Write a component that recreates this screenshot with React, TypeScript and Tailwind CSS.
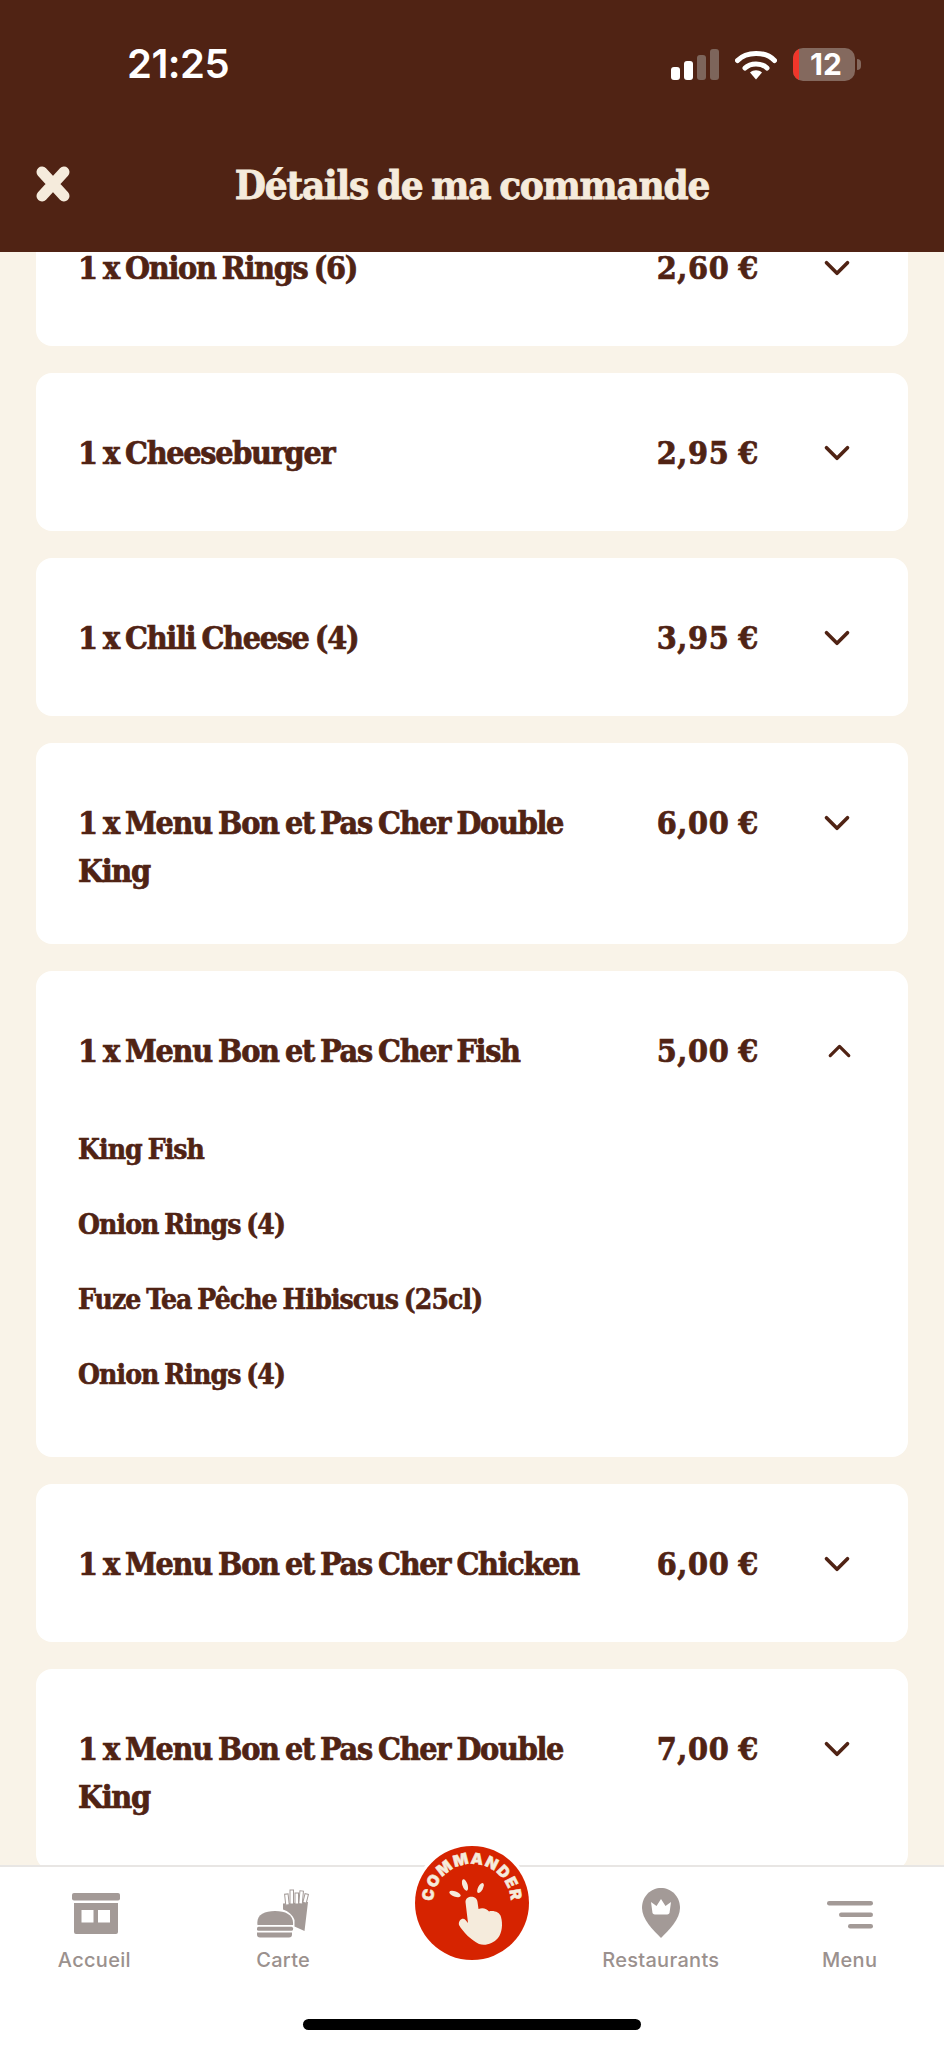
import type { ReactNode } from 'react';
import { ChevronDown, ChevronUp } from 'lucide-react';

const displayFont = "font-['DejaVu_Serif_Condensed','DejaVu_Serif',serif]";
const rowText = `text-[32px] leading-[48px] font-bold text-[#502314] [-webkit-text-stroke:0.7px_#502314] ${displayFont}`;

interface OrderRowProps {
  title: string;
  price: string;
  open?: boolean;
  items?: string[];
}

function OrderRow({ title, price, open = false, items = [] }: OrderRowProps) {
  return (
    <div className="min-h-[158px] shrink-0 rounded-[16px] bg-white pt-[56px] pb-[49px] pl-[42px] pr-[50px]">
      <div className="flex items-start">
        <h3 className={`min-w-0 flex-1 pr-[20px] tracking-[-1.3px] [word-spacing:-2.5px] ${rowText}`}>
          {title}
        </h3>
        <span className={`w-[120px] shrink-0 text-right tracking-[0.7px] [word-spacing:-2px] ${rowText}`}>
          {price}
        </span>
        <span className={`ml-[57px] flex h-[48px] w-[42px] shrink-0 items-center justify-center text-[#502314] ${open ? 'pl-[5px]' : ''}`}>
          {open ? <ChevronUp size={42} strokeWidth={2.1} /> : <ChevronDown size={42} strokeWidth={2.1} />}
        </span>
      </div>
      {items.length > 0 && (
        <ul className="mt-[52px] flex flex-col gap-[30px] pb-[11px]">
          {items.map((item, i) => (
            <li
              key={i}
              className={`text-[28px] leading-[45px] font-bold tracking-[-0.9px] text-[#502314] [-webkit-text-stroke:0.6px_#502314] [word-spacing:-2px] ${displayFont}`}
            >
              {item}
            </li>
          ))}
        </ul>
      )}
    </div>
  );
}

function StatusIcons() {
  return (
    <div className="flex items-center gap-[16px]">
      <svg width="48" height="31" viewBox="0 0 48 31" fill="none">
        <rect x="0" y="18" width="9" height="13" rx="3" fill="#fff" />
        <rect x="13" y="12" width="9" height="19" rx="3" fill="#fff" />
        <rect x="26" y="6" width="9" height="25" rx="3" fill="#7d655b" />
        <rect x="39" y="0" width="9" height="31" rx="3" fill="#7d655b" />
      </svg>
      <svg width="42" height="31" viewBox="0 0 42 31" fill="none">
        <path d="M2.5 11.5C11.5 2 30.5 2 39.5 11.5" stroke="#fff" strokeWidth="5" strokeLinecap="round" />
        <path d="M10 19C15.5 13.5 26.5 13.5 32 19" stroke="#fff" strokeWidth="5" strokeLinecap="round" />
        <path d="M15 23.5C18.5 20.5 23.5 20.5 27 23.5L21 30.5Z" fill="#fff" />
      </svg>
      <div className="flex items-center">
        <div className="relative h-[33px] w-[62px] overflow-hidden rounded-[10px] bg-[#84695e]">
          <div className="h-full w-[6px] bg-[#f0362a]" />
          <span className="absolute inset-0 flex items-center justify-center pl-[4px] font-['Inter',sans-serif] text-[30px] leading-none font-bold text-white">
            12
          </span>
        </div>
        <div className="ml-[2px] h-[11px] w-[4px] rounded-r-full bg-[#84695e]" />
      </div>
    </div>
  );
}

function HomeIcon() {
  return (
    <svg className="mb-[3px] ml-[4px]" width="48" height="42" viewBox="0 0 48 42" fill="#a39a97">
      <rect x="0" y="0" width="48" height="7.5" rx="2" />
      <path fillRule="evenodd" d="M2 10h44v29a2 2 0 0 1-2 2H4a2 2 0 0 1-2-2ZM9.500 17v12.500h12V17ZM26 17v12.500h12V17Z" />
    </svg>
  );
}

function BurgerIcon() {
  return (
    <svg width="52" height="50" viewBox="0 0 52 50" fill="#a39a97">
      <path d="M26 15.500L51 14L47.500 43L37.500 38.500L37.500 32C36 27 31 23 26 21.500Z" />
      <g fill="#fff" stroke="#a39a97" strokeWidth="1">
        <rect x="28" y="6" width="3.500" height="11" transform="rotate(-6 30 10)" />
        <rect x="33" y="2" width="3.500" height="14" />
        <rect x="38" y="5" width="3.500" height="11" />
        <rect x="42.500" y="3" width="3.500" height="13" transform="rotate(5 45 8)" />
        <rect x="47" y="6" width="3.500" height="9" transform="rotate(14 49 10)" />
      </g>
      <path d="M0.500 37C-1 27 7 23 18 23C29 23 37 27 36 37Z" />
      <rect x="0" y="38.800" width="36" height="4" rx="1.500" fill="#a39a97" />
      <path d="M0 44.500h35v2a3 3 0 0 1-3 3H3a3 3 0 0 1-3-3Z" />
    </svg>
  );
}

function PinIcon() {
  return (
    <svg width="38" height="50" viewBox="0 0 38 50">
      <path d="M19 0C9 0 0 8 0 20C0 31 11 42 19 50C27 42 38 31 38 20C38 8 29 0 19 0Z" fill="#a39a97" />
      <path d="M9 14L14.500 18L19 11L23.500 18L29 14L27.500 25C27 26.500 25.500 26.500 24 26.500H14C12.500 26.500 11 26.500 10.500 25Z" fill="#fff" />
    </svg>
  );
}

function MenuIcon() {
  return (
    <svg className="mb-[9px]" width="46" height="28" viewBox="0 0 46 28" fill="#a39a97">
      <rect x="0" y="0" width="46" height="4.500" rx="2.200" />
      <rect x="12" y="11.500" width="34" height="4.500" rx="2.200" />
      <rect x="21" y="23" width="25" height="4.500" rx="2.200" />
    </svg>
  );
}

function CommanderButton() {
  return (
    <div className="h-[120px] w-[120px] rounded-full bg-white p-[3px]">
      <svg width="114" height="114" viewBox="0 0 114 114">
        <circle cx="57" cy="57" r="57" fill="#d62300" />
        <defs>
          <path id="commander-arc" d="M20.350 70.300A39 39 0 1 1 93.650 70.300" />
        </defs>
        <text fill="#f5ebdc" stroke="#f5ebdc" strokeWidth="0.5" fontFamily="Inter, sans-serif" fontWeight="900" fontSize="15.500" letterSpacing="1.200" textAnchor="middle">
          <textPath href="#commander-arc" startOffset="50%">COMMANDER</textPath>
        </text>
        <g fill="#f5ebdc">
          <ellipse cx="40" cy="48" rx="6" ry="2.600" transform="rotate(20 40 48)" />
          <ellipse cx="50" cy="39" rx="2.600" ry="6" transform="rotate(-18 50 39)" />
          <ellipse cx="65.500" cy="42" rx="2.400" ry="5.500" transform="rotate(28 65.500 42)" />
          <path d="M50.500 56C50.500 49 62 49 62.500 56L63.500 63C68 61 72 63 74 65.500C78 64 85 66 86 71C88 78 87 87 83 92C78 98 70 100 64 98C56 94 48 86 44 79C43 74 48 71 50.500 74L53 77Z" />
        </g>
      </svg>
    </div>
  );
}

function TabItem({ icon, label }: { icon: ReactNode; label: string }) {
  return (
    <div className="flex flex-col items-center">
      <div className="flex h-[50px] items-end">{icon}</div>
      <span className="mt-[8px] font-['Inter',sans-serif] text-[20px] leading-[28px] font-medium tracking-[0.3px] text-[#9b918e]">
        {label}
      </span>
    </div>
  );
}

const doubleKing = '1 x Menu Bon et Pas Cher Double King';

export default function App() {
  return (
    <div className="flex h-[2048px] w-[944px] flex-col overflow-hidden bg-[#f9f3e8]">
      {/* Header */}
      <header className="relative z-10 h-[252px] shrink-0 bg-[#502314]">
        <div className="flex h-[82px] items-center justify-between pt-[46px] pr-[83px] pl-[127px]">
          <span className="font-['Inter',sans-serif] text-[40px] leading-[36px] font-semibold tracking-[-0.5px] text-white">21:25</span>
          <StatusIcons />
        </div>
        <div className="relative mt-[73px] flex h-[60px] items-center justify-center">
          <svg className="absolute top-[11px] left-[36px]" width="34" height="36" viewBox="0 0 34 36">
            <path d="M6 6L28 30M28 6L6 30" stroke="#f5ebdc" strokeWidth="11" strokeLinecap="round" />
          </svg>
          <h1 className={`text-[40px] leading-[60px] font-bold tracking-[-1.2px] text-[#f5ebdc] [-webkit-text-stroke:0.8px_#f5ebdc] [word-spacing:-2.5px] ${displayFont}`}>
            Détails de ma commande
          </h1>
        </div>
      </header>

      {/* Order lines */}
      <main className="min-h-0 flex-1 overflow-hidden px-[36px]">
        <div className="-mt-[64px] flex flex-col gap-[27px]">
          <OrderRow title="1 x Onion Rings (6)" price="2,60 €" />
          <OrderRow title="1 x Cheeseburger" price="2,95 €" />
          <OrderRow title="1 x Chili Cheese (4)" price="3,95 €" />
          <OrderRow title={doubleKing} price="6,00 €" />
          <OrderRow
            title="1 x Menu Bon et Pas Cher Fish"
            price="5,00 €"
            open
            items={['King Fish', 'Onion Rings (4)', 'Fuze Tea Pêche Hibiscus (25cl)', 'Onion Rings (4)']}
          />
          <OrderRow title="1 x Menu Bon et Pas Cher Chicken" price="6,00 €" />
          <OrderRow title={doubleKing} price="7,00 €" />
        </div>
      </main>

      {/* Tab bar */}
      <nav className="relative z-10 h-[183px] shrink-0 border-t-2 border-[#e8e6e4] bg-white">
        <div className="grid grid-cols-5 pt-[21px]">
          <TabItem icon={<HomeIcon />} label="Accueil" />
          <TabItem icon={<BurgerIcon />} label="Carte" />
          <div className="-mt-[45px] flex justify-center">
            <CommanderButton />
          </div>
          <TabItem icon={<PinIcon />} label="Restaurants" />
          <TabItem icon={<MenuIcon />} label="Menu" />
        </div>
        <div className="absolute bottom-[18px] left-[303px] h-[11px] w-[338px] rounded-full bg-black" />
      </nav>
    </div>
  );
}
